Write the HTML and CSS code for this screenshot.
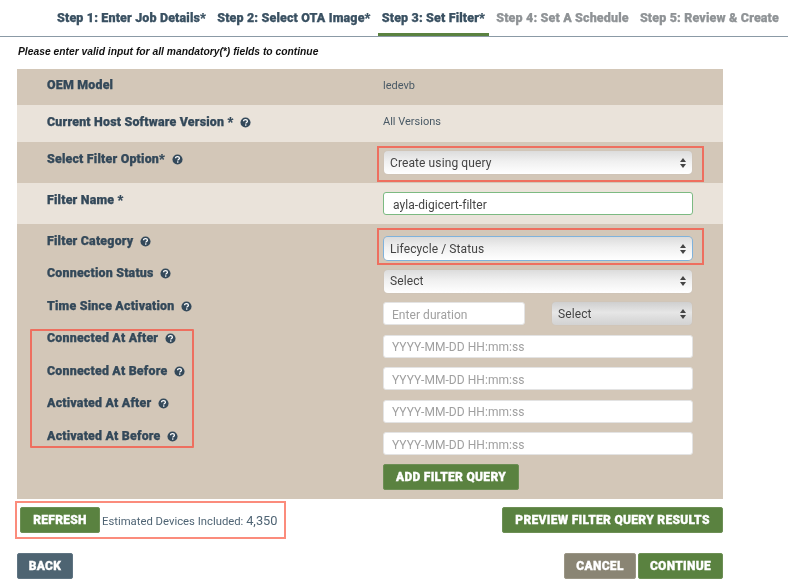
FILE: index.html
```html
<!DOCTYPE html>
<html lang="en">
<head>
<meta charset="utf-8">
<title>Set Filter</title>
<link rel="stylesheet" href="styles.css">
</head>
<body>
<svg class="sprite" width="0" height="0" aria-hidden="true">
  <symbol id="help" viewBox="0 0 12 12">
    <circle cx="6" cy="6" r="5.5" fill="#34495a"/>
    <path d="M3.9 4.7C3.9 3.5 4.8 2.8 6 2.8C7.2 2.8 8.1 3.5 8.1 4.6C8.1 6 6.3 6 6.3 7.2" fill="none" stroke="#fff" stroke-width="1.4"/>
    <rect x="5.5" y="8" width="1.5" height="1.5" fill="#fff"/>
  </symbol>
</svg>
<nav class="steps">
  <a class="step">Step 1: Enter Job Details*</a>
  <a class="step">Step 2: Select OTA Image*</a>
  <a class="step active">Step 3: Set Filter*</a>
  <a class="step muted">Step 4: Set A Schedule</a>
  <a class="step muted">Step 5: Review &amp; Create</a>
</nav>
<p class="notice">Please enter valid input for all mandatory(*) fields to continue</p>
<main class="panel">
  <div class="row row-a">
    <span class="label">OEM Model</span>
    <span class="value">ledevb</span>
  </div>
  <div class="row row-b">
    <span class="label">Current Host Software Version * <svg class="help"><use href="#help"/></svg></span>
    <span class="value">All Versions</span>
  </div>
  <div class="row row-c">
    <span class="label">Select Filter Option* <svg class="help"><use href="#help"/></svg></span>
    <div class="marked">
      <div class="select"><select><option>Create using query</option></select></div>
    </div>
  </div>
  <div class="row row-d">
    <span class="label">Filter Name *</span>
    <input class="input valid" value="ayla-digicert-filter">
  </div>
  <div class="query">
    <div class="labels">
      <span class="label qlabel">Filter Category <svg class="help"><use href="#help"/></svg></span>
      <span class="label qlabel">Connection Status <svg class="help"><use href="#help"/></svg></span>
      <span class="label qlabel">Time Since Activation <svg class="help"><use href="#help"/></svg></span>
      <div class="date-labels">
        <span class="label qlabel">Connected At After <svg class="help"><use href="#help"/></svg></span>
        <span class="label qlabel">Connected At Before <svg class="help"><use href="#help"/></svg></span>
        <span class="label qlabel">Activated At After <svg class="help"><use href="#help"/></svg></span>
        <span class="label qlabel">Activated At Before <svg class="help"><use href="#help"/></svg></span>
      </div>
    </div>
    <div class="controls">
      <div class="marked marked-cat">
        <div class="select focused"><select><option>Lifecycle / Status</option></select></div>
      </div>
      <div class="select"><select><option>Select</option></select></div>
      <div class="duration">
        <input class="input short" placeholder="Enter duration">
        <div class="select small"><select><option>Select</option></select></div>
      </div>
      <input class="input" placeholder="YYYY-MM-DD HH:mm:ss">
      <input class="input" placeholder="YYYY-MM-DD HH:mm:ss">
      <input class="input" placeholder="YYYY-MM-DD HH:mm:ss">
      <input class="input" placeholder="YYYY-MM-DD HH:mm:ss">
      <button class="btn add">ADD FILTER QUERY</button>
    </div>
  </div>
</main>
<div class="estimate-row">
  <div class="estimate">
    <button class="btn refresh">REFRESH</button>
    <span class="est-text">Estimated Devices Included: <span class="count">4,350</span></span>
  </div>
  <button class="btn preview">PREVIEW FILTER QUERY RESULTS</button>
</div>
<footer class="actions">
  <button class="btn back">BACK</button>
  <div class="right-actions">
    <button class="btn cancel">CANCEL</button>
    <button class="btn continue">CONTINUE</button>
  </div>
</footer>
</body>
</html>
```
FILE: styles.css
```css
*, *::before, *::after { box-sizing: border-box; }
html, body { margin: 0; padding: 0; }
body {
  width: 788px;
  height: 579px;
  overflow: hidden;
  background: #fff;
  font-family: Roboto, "Liberation Sans", sans-serif;
  color: #34495a;
  filter: blur(0.35px);
}
.sprite { position: absolute; }

.steps {
  height: 37px;
  padding-left: 53.5px;
  display: flex;
  gap: 4.2px;
  border-bottom: 1px solid #8b9aa6;
}
.step {
  padding: 10px 3.5px 0;
  height: 36px;
  font-size: 12.5px;
  font-weight: 900;
  letter-spacing: 0.14px;
  -webkit-text-stroke: 0.25px currentColor;
  white-space: nowrap;
  color: #3a5162;
}
.step.active { border-bottom: 3px solid #5a8240; }
.step.muted { color: #8f9396; }

.notice {
  margin: 0;
  height: 32px;
  padding: 8.5px 0 0 18px;
  font-family: "Liberation Sans", Arial, sans-serif;
  font-size: 10.3px;
  font-style: italic;
  font-weight: 700;
  color: #111;
}

.panel { width: 706px; margin-left: 17px; }
.row {
  display: grid;
  grid-template-columns: 336px 310px;
  padding-left: 30px;
}
.row-a { height: 36px; background: #d3c7b8; align-items: center; }
.row-b { height: 37px; background: #eae3da; align-items: center; }
.row-c { height: 41px; background: #d3c7b8; padding-top: 9px; }
.row-d { height: 41px; background: #eae3da; padding-top: 9px; }
.query {
  height: 275px;
  background: #d3c7b8;
  display: grid;
  grid-template-columns: 336px 310px;
  padding-left: 30px;
}

.label {
  font-size: 12.4px;
  font-weight: 900;
  letter-spacing: 0.2px;
  -webkit-text-stroke: 0.25px currentColor;
  color: #34495a;
  white-space: nowrap;
}
.help { width: 11px; height: 11px; margin-left: 3.3px; vertical-align: -2px; }
.value { font-size: 11px; color: #4a5a66; }
.row-b .value { padding-bottom: 1px; }
.row-a .label, .row-a .value, .row-b .label, .row-b .value { position: relative; top: -2px; }
.row-a .label { top: -3px; }

.labels { padding-top: 8.5px; }
.qlabel { display: block; height: 32.5px; line-height: 15px; }
.date-labels { position: relative; }
.date-labels::after {
  content: "";
  position: absolute;
  left: -17px;
  top: -1px;
  width: 164px;
  height: 119px;
  border: 2px solid #ee6f5f;
  border-radius: 1px;
}

.marked { position: relative; }
.marked::after {
  content: "";
  position: absolute;
  left: -6px;
  top: -5px;
  width: 327px;
  height: 36px;
  border: 2px solid #ee6f5f;
  pointer-events: none;
}
.marked-cat::after { top: -9px; height: 37px; }

.controls {
  padding-top: 13px;
  display: flex;
  flex-direction: column;
  gap: 9.5px;
  align-items: flex-start;
}
.select {
  position: relative;
  width: 308px;
  margin-left: 1px;
  height: 23px;
  border-radius: 4px;
  background: linear-gradient(#dcdcdc, #f0f0f0 45%, #fff);
  box-shadow: 0 0 1px #bbb;
}
.select::before, .select::after {
  content: "";
  position: absolute;
  right: 6px;
  border-left: 3px solid transparent;
  border-right: 3px solid transparent;
}
.select::before { top: 6.5px; border-bottom: 4.5px solid #444; }
.select::after { top: 12.5px; border-top: 4.5px solid #444; }
.select select {
  appearance: none;
  width: 100%;
  height: 100%;
  padding: 0 0 0 6px;
  border: 0;
  background: none;
  font: 12px Roboto, sans-serif;
  letter-spacing: 0.1px;
  color: #444;
}
.select.focused { box-shadow: 0 0 0 1px #7fb2dc; }
.select.small {
  width: 140px;
  margin: 0 1px 0 0;
  background: linear-gradient(#cfcfcf, #e6e6e6 45%, #d2d2d2);
}
.input {
  display: block;
  width: 310px;
  height: 23px;
  padding: 2px 8px 0;
  border: 1px solid #e3e3e3;
  border-radius: 3px;
  background: #fff;
  font: 12px Roboto, sans-serif;
  letter-spacing: 0.05px;
  color: #444;
}
.input::placeholder { color: #a0a0a0; opacity: 1; }
.input.valid { border-color: #7cba82; padding-left: 9px; }
.duration {
  display: flex;
  justify-content: space-between;
  width: 310px;
}
.input.short { width: 142px; }

.btn {
  border: 1px solid #6d8f55;
  border-radius: 2px;
  padding: 0;
  font: 900 12px Roboto, sans-serif;
  letter-spacing: 0.3px;
  -webkit-text-stroke: 0.3px #fff;
  color: #fff;
  background: #5a8240;
  text-align: center;
}
.add { width: 136px; height: 26px; margin-top: -1px; }

.estimate-row {
  width: 708px;
  margin: 2px 0 0 15px;
  display: flex;
  justify-content: space-between;
  align-items: flex-start;
}
.estimate {
  width: 271px;
  height: 38px;
  border: 2px solid #fb8c7c;
  display: flex;
  align-items: center;
  padding-left: 3px;
  gap: 2px;
}
.refresh { width: 80px; height: 26px; }
.est-text { font-size: 11.3px; color: #4f6474; }
.count { font-size: 12.8px; }
.preview { width: 221px; height: 26px; margin-top: 6px; }

.actions {
  width: 706px;
  margin: 14px 0 0 17px;
  display: flex;
  justify-content: space-between;
}
.back { width: 56px; height: 26px; background: #4e6472; border-color: #5f7482; }
.right-actions { display: flex; gap: 2px; }
.cancel { width: 72px; height: 26px; background: #8a8574; border-color: #9b9686; }
.continue { width: 85px; height: 26px; }
```
